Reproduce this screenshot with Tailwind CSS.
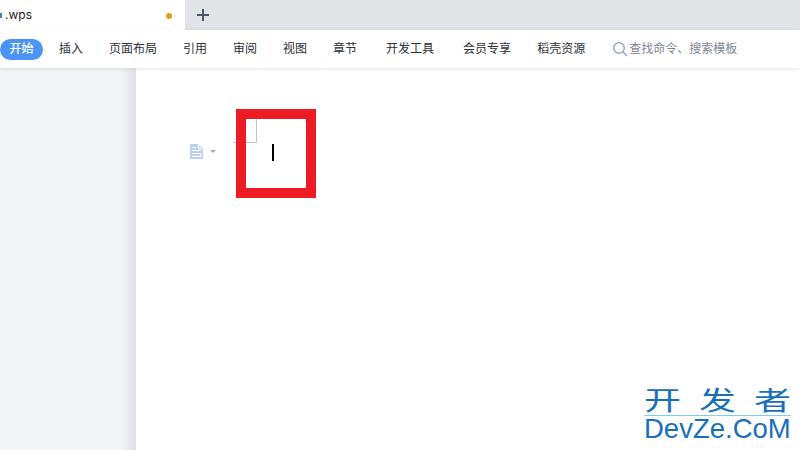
<!DOCTYPE html>
<html lang="en">
  <head>
    <meta charset="UTF-8" />
    <title>.wps</title>
    <script src="https://cdn.jsdelivr.net/npm/@tailwindcss/browser@4"></script>
  </head>
  <body class="w-[800px] h-[450px] overflow-hidden bg-white font-['Inter','Noto_Sans_CJK_SC',sans-serif]">
    <div class="relative flex flex-col h-[450px]">
      <!-- tab bar -->
      <div class="flex h-[30px] bg-[#e2e3e7] shrink-0">
        <div class="relative flex items-center w-[185px] bg-white pl-[5px] text-[12px] text-[#222]">
          <span class="absolute left-0 top-[13px] w-[2px] h-[5px] bg-[#3f7fd0]"></span>
          .wps
          <span class="absolute left-[166px] top-[13px] w-[6px] h-[6px] rounded-full bg-[#ea9b0c]"></span>
        </div>
        <div class="flex items-center pl-[11px]">
          <svg width="14" height="14" viewBox="0 0 14 14" fill="none" stroke="#4a5568" stroke-width="2"><path d="M7 1v12M1 7h12" /></svg>
        </div>
      </div>

      <!-- toolbar -->
      <div class="relative z-10 flex items-center h-[38px] bg-white text-[12px] text-[#2b2f36] shadow-[0_1px_4px_rgba(0,0,0,0.1)] shrink-0">
        <span class="flex items-center justify-center w-[43px] h-[21px] rounded-full bg-[#4a94f7] text-white font-medium">开始</span>
        <span class="ml-[16px]">插入</span>
        <span class="ml-[26px]">页面布局</span>
        <span class="ml-[26px]">引用</span>
        <span class="ml-[26px]">审阅</span>
        <span class="ml-[26px]">视图</span>
        <span class="ml-[26px]">章节</span>
        <span class="ml-[29px]">开发工具</span>
        <span class="ml-[29px]">会员专享</span>
        <span class="ml-[26px]">稻壳资源</span>
        <svg class="ml-[27px]" width="16" height="16" viewBox="0 0 16 16" fill="none" stroke="#98a3b8" stroke-width="1.4"><circle cx="7" cy="7" r="5.3" /><path d="M11 11l4 4" /></svg>
        <span class="ml-[1px] text-[#7d8592]">查找命令、搜索模板</span>
      </div>

      <!-- page -->
      <div class="flex flex-1">
        <div class="w-[136px] bg-[#f4f5f7] relative">
          <div class="absolute right-0 top-0 bottom-0 w-[16px] bg-gradient-to-r from-[#f4f5f7] to-[#e0e1e4]"></div>
        </div>
        <div class="relative flex-1 bg-white">
          <!-- paragraph handle -->
          <svg class="absolute left-[54px] top-[76px]" width="13" height="15" viewBox="0 0 13 15">
            <path fill="#bdd0ec" d="M0 0h8l5 5v10H0z" />
            <path fill="none" stroke="#fff" d="M8.5 0v4.5H13M2 3.5h4M2 6.5h9M4 9.5h7v3H2M2 9.5h2" />
          </svg>
          <span class="absolute left-[74px] top-[82px] w-0 h-0 border-x-[3px] border-x-transparent border-t-[3px] border-t-[#aaaaaa]"></span>
          <!-- red annotation -->
          <div class="absolute left-[100px] top-[41px] w-[80px] h-[89px] border-[10px] border-[#ed1c24]"></div>
          <!-- page corner mark, drawn over the annotation's inside only -->
          <span class="absolute left-[110px] top-[51px] w-[11px] h-[24px] border-r border-b border-[#c4c4c4]"></span>
          <span class="absolute left-[97px] top-[74px] w-[3px] h-px bg-[#c4c4c4]"></span>
          <!-- caret -->
          <span class="absolute left-[136px] top-[76px] w-[2px] h-[17px] bg-black"></span>
        </div>
      </div>

      <!-- watermark -->
      <div class="absolute left-[644px] top-[384px] w-[147px] text-[#1a6fbb]">
        <div class="flex justify-between h-[31px] text-[37px] leading-[28px] font-['Noto_Sans_CJK_SC',sans-serif]">
          <span class="scale-y-[0.7]">开</span><span class="scale-y-[0.7]">发</span><span class="scale-y-[0.7]">者</span>
        </div>
        <div class="h-px bg-[#7fd0f0]"></div>
        <div class="h-[27px] text-[27.5px] leading-[26px] font-['Liberation_Sans',sans-serif]">DevZe.CoM</div>
      </div>
    </div>
  </body>
</html>
